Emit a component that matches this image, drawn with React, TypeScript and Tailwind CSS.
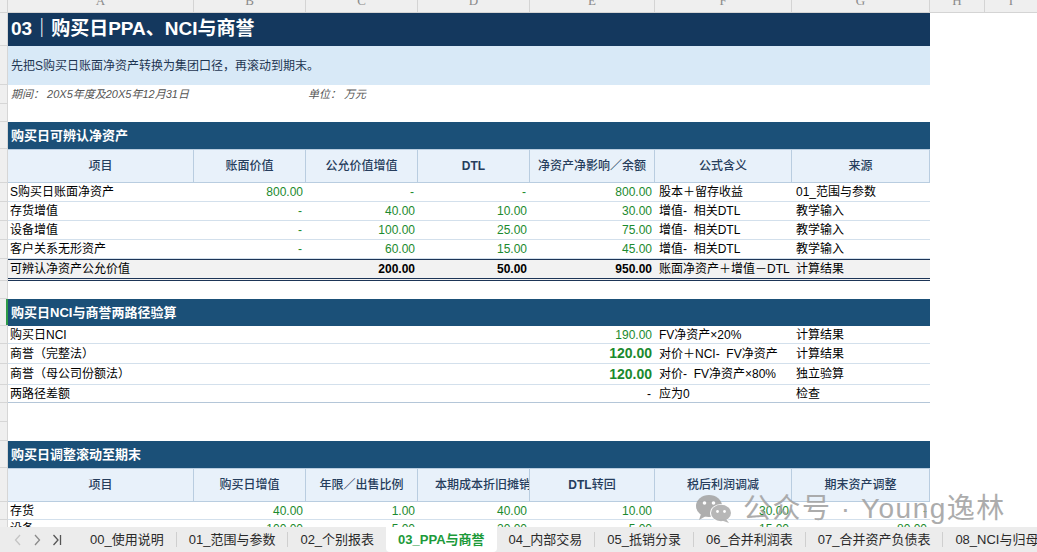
import React from 'react';

const W = ['w-[186px]', 'w-[112px]', 'w-[112px]', 'w-[112px]', 'w-[125px]', 'w-[137px]', 'w-[138px]'];
const FONT = "font-['Liberation_Sans','Noto_Sans_CJK_SC',sans-serif]";

function Row({
  className = '',
  marker = false,
  children,
}: {
  className?: string;
  marker?: boolean;
  children?: React.ReactNode;
}) {
  return (
    <div className={`flex shrink-0 ${className}`}>
      <div className="relative w-[8px] shrink-0 border-r border-b border-[#d6d6d6] bg-[#efefef]">
        {marker && <div className="absolute right-[-1px] top-0 h-full w-[2px] bg-[#2e9a48]" />}
      </div>
      {children}
    </div>
  );
}

function Cell({ i, className = '', children }: { i: number; className?: string; children?: React.ReactNode }) {
  return <div className={`${W[i]} shrink-0 overflow-hidden whitespace-nowrap flex items-center ${className}`}>{children}</div>;
}

function SectionBar({ title, marker = false }: { title: string; marker?: boolean }) {
  return (
    <Row className="h-[27px]" marker={marker}>
      <div className="flex w-[922px] items-center bg-[#1b5078] px-[3px] text-[13px] font-bold text-white">{title}</div>
    </Row>
  );
}

function HeaderRow({ cols }: { cols: React.ReactNode[] }) {
  return (
    <Row className="h-[34px]">
      <div className="flex w-[922px] border-y border-[#b9cde0] bg-[#e8f1fa] text-[12px] font-medium text-[#263d5c]">
        {cols.map((c, i) => (
          <Cell key={i} i={i} className="justify-center border-r border-[#b9cde0]">
            {c}
          </Cell>
        ))}
      </div>
    </Row>
  );
}

type DataRow = { label: string; vals: string[]; f: string; g: string };

const ppa: DataRow[] = [
  { label: 'S购买日账面净资产', vals: ['800.00', '-', '-', '800.00'], f: '股本＋留存收益', g: '01_范围与参数' },
  { label: '存货增值', vals: ['-', '40.00', '10.00', '30.00'], f: '增值-  相关DTL', g: '教学输入' },
  { label: '设备增值', vals: ['-', '100.00', '25.00', '75.00'], f: '增值-  相关DTL', g: '教学输入' },
  { label: '客户关系无形资产', vals: ['-', '60.00', '15.00', '45.00'], f: '增值-  相关DTL', g: '教学输入' },
];

const roll = [
  { label: '存货', vals: ['40.00', '1.00', '40.00', '10.00', '30.00', '-'] },
  { label: '设备', vals: ['100.00', '5.00', '20.00', '5.00', '15.00', '80.00'] },
];

const tabs = ['00_使用说明', '01_范围与参数', '02_个别报表', '03_PPA与商誉', '04_内部交易', '05_抵销分录', '06_合并利润表', '07_合并资产负债表', '08_NCI与归母'];

function WeChatIcon() {
  return (
    <svg width="38" height="30" viewBox="0 0 38 30">
      <ellipse cx="14" cy="12" rx="13" ry="11" fill="#a6a6a6" />
      <path d="M6 20 L4 26 L11 22 Z" fill="#a6a6a6" />
      <circle cx="9.5" cy="9" r="1.8" fill="#fff" />
      <circle cx="18.5" cy="9" r="1.8" fill="#fff" />
      <ellipse cx="26" cy="19" rx="11" ry="9" fill="#fff" />
      <ellipse cx="26" cy="19" rx="10" ry="8.2" fill="#b0b0b0" />
      <path d="M31 25 L34 29 L27 26.5 Z" fill="#b0b0b0" />
      <circle cx="22.5" cy="17.5" r="1.4" fill="#fff" />
      <circle cx="29.5" cy="17.5" r="1.4" fill="#fff" />
    </svg>
  );
}

export default function App() {
  const letters = ['A', 'B', 'C', 'D', 'E', 'F', 'G'];
  return (
    <div className={`relative flex h-[552px] w-[1037px] flex-col overflow-hidden bg-white ${FONT}`}>
      <div className="flex-1 overflow-hidden">
        {/* column letters */}
        <div className="flex h-[13px] border-b border-[#d4d4d4] bg-[#efefef] font-['Liberation_Serif',serif] text-[13px] text-[#8a8a8a]">
          <div className="w-[8px] shrink-0 border-r border-[#d4d4d4]" />
          {letters.map((l, i) => (
            <div key={l} className={`${W[i]} shrink-0 overflow-hidden border-r border-[#d4d4d4] text-center leading-none`}>
              <div className="-mt-[6px]">{l}</div>
            </div>
          ))}
          <div className="w-[55px] shrink-0 overflow-hidden border-r border-[#d4d4d4] text-center leading-none"><div className="-mt-[6px]">H</div></div>
          <div className="flex-1 overflow-hidden text-center leading-none"><div className="-mt-[6px]">I</div></div>
        </div>

        <Row className="h-[33px]">
          <div className="flex w-[922px] items-center bg-[#14385e] px-[3px] text-[19px] font-bold text-white">03｜购买日PPA、NCI与商誉</div>
        </Row>
        <Row className="h-[39px]">
          <div className="flex w-[922px] items-center bg-[#d8e9f7] px-[3px] text-[12px] text-[#1e3552]">先把S购买日账面净资产转换为集团口径，再滚动到期末。</div>
        </Row>
        <Row className="h-[19px]">
          <div className="flex w-[922px] items-center text-[11px] italic text-[#555]">
            <div className="w-[300px] pl-[3px]">期间： 20X5年度及20X5年12月31日</div>
            <div>单位： 万元</div>
          </div>
        </Row>
        <Row className="h-[18px]" />

        <SectionBar title="购买日可辨认净资产" />
        <HeaderRow cols={['项目', '账面价值', '公允价值增值', <span className="font-bold">DTL</span>, '净资产净影响／余额', '公式含义', '来源']} />
        {ppa.map((r) => (
          <Row key={r.label} className="h-[19px]">
            <div className="flex w-[922px] border-b border-[#d3e0ec] text-[12px] text-black">
              <Cell i={0} className="pl-[2px]">{r.label}</Cell>
              {r.vals.map((v, i) => (
                <Cell key={i} i={i + 1} className={`justify-end text-[#1b8a2e] ${v === '-' ? 'pr-[4px]' : 'pr-[3px]'}`}>{v}</Cell>
              ))}
              <Cell i={5} className="whitespace-pre pl-[4px]">{r.f}</Cell>
              <Cell i={6} className="pl-[4px]">{r.g}</Cell>
            </div>
          </Row>
        ))}
        <Row className="h-[22px]">
          <div className="flex w-[922px] border-t border-b-[3px] border-double border-t-[#1d3557] border-b-[#1d3557] bg-[#f2f2f2] text-[12px] text-black">
            <Cell i={0} className="pl-[2px]">可辨认净资产公允价值</Cell>
            <Cell i={1} />
            <Cell i={2} className="justify-end pr-[3px] font-bold">200.00</Cell>
            <Cell i={3} className="justify-end pr-[3px] font-bold">50.00</Cell>
            <Cell i={4} className="justify-end pr-[3px] font-bold">950.00</Cell>
            <Cell i={5} className="pl-[4px]">账面净资产＋增值－DTL</Cell>
            <Cell i={6} className="pl-[4px]">计算结果</Cell>
          </div>
        </Row>
        <Row className="h-[18px]" />

        <SectionBar title="购买日NCI与商誉两路径验算" marker />
        {[
          { l: '购买日NCI', v: '190.00', big: false, f: 'FV净资产×20%', g: '计算结果', h: 'h-[18px]' },
          { l: '商誉（完整法）', v: '120.00', big: true, f: '对价＋NCI-  FV净资产', g: '计算结果', h: 'h-[20px]' },
          { l: '商誉（母公司份额法）', v: '120.00', big: true, f: '对价-  FV净资产×80%', g: '独立验算', h: 'h-[21px]' },
          { l: '两路径差额', v: '-', big: false, f: '应为0', g: '检查', h: 'h-[18px]' },
        ].map((r, idx) => (
          <Row key={r.l} className={r.h}>
            <div className={`flex w-[922px] border-b text-[12px] text-black ${idx === 3 ? 'border-[#b4c6d8]' : 'border-[#d3e0ec]'}`}>
              <Cell i={0} className="pl-[2px]">{r.l}</Cell>
              <Cell i={1} />
              <Cell i={2} />
              <Cell i={3} />
              <Cell
                i={4}
                className={`justify-end ${r.big ? 'pr-[3px] text-[14px] font-bold text-[#1b8a2e]' : r.v === '-' ? 'pr-[4px] text-black' : 'pr-[3px] text-[#1b8a2e]'}`}
              >
                {r.v}
              </Cell>
              <Cell i={5} className="whitespace-pre pl-[4px]">{r.f}</Cell>
              <Cell i={6} className="pl-[4px]">{r.g}</Cell>
            </div>
          </Row>
        ))}
        <Row className="h-[19px]" />
        <Row className="h-[19px]" />

        <SectionBar title="购买日调整滚动至期末" />
        <HeaderRow
          cols={[
            '项目',
            '购买日增值',
            '年限／出售比例',
            <span className="w-full pl-[17px] text-left">本期成本折旧摊销</span>,
            <span><span className="font-bold">DTL</span>转回</span>,
            '税后利润调减',
            '期末资产调整',
          ]}
        />
        {roll.map((r) => (
          <Row key={r.label} className="h-[18px]">
            <div className="flex w-[922px] border-b border-[#d3e0ec] text-[12px] text-black">
              <Cell i={0} className="pl-[2px]">{r.label}</Cell>
              {r.vals.map((v, i) => (
                <Cell key={i} i={i + 1} className="justify-end pr-[3px] text-[#1b8a2e]">{v}</Cell>
              ))}
            </div>
          </Row>
        ))}
      </div>

      {/* sheet tabs */}
      <div className="flex h-[25px] shrink-0 items-center bg-[#ececec] text-[13px] text-[#2a2a2a]">
        <div className="flex w-[78px] shrink-0 items-center gap-[11px] pl-[14px]">
          <svg width="8" height="12" viewBox="0 0 8 12"><path d="M6 1 L1.5 6 L6 11" fill="none" stroke="#c4c4c4" strokeWidth="1.3" /></svg>
          <svg width="8" height="12" viewBox="0 0 8 12"><path d="M2 1 L6.5 6 L2 11" fill="none" stroke="#8a8a8a" strokeWidth="1.3" /></svg>
          <svg width="10" height="12" viewBox="0 0 10 12"><path d="M1.5 1 L6 6 L1.5 11 M8.5 1 V11" fill="none" stroke="#555" strokeWidth="1.3" /></svg>
        </div>
        {tabs.map((t, i) => {
          const active = i === 3;
          const sep = i > 0 && i !== 3 && i !== 4;
          return (
            <React.Fragment key={t}>
              {sep && <div className="h-[15px] w-px shrink-0 bg-[#cfcfcf]" />}
              <div
                className={`flex h-full shrink-0 items-center whitespace-nowrap px-[12px] ${
                  active ? 'rounded-b-[4px] bg-white font-bold text-[#1c9a3a]' : ''
                }`}
              >
                {t}
              </div>
            </React.Fragment>
          );
        })}
      </div>

      {/* watermark */}
      <div className="pointer-events-none absolute left-[695px] top-[494px] flex items-center gap-[10px] opacity-90">
        <WeChatIcon />
        <span className="text-[28px] leading-none tracking-[1.5px] text-[#a4a4a4]">公众号 · Young逸林</span>
      </div>
    </div>
  );
}
